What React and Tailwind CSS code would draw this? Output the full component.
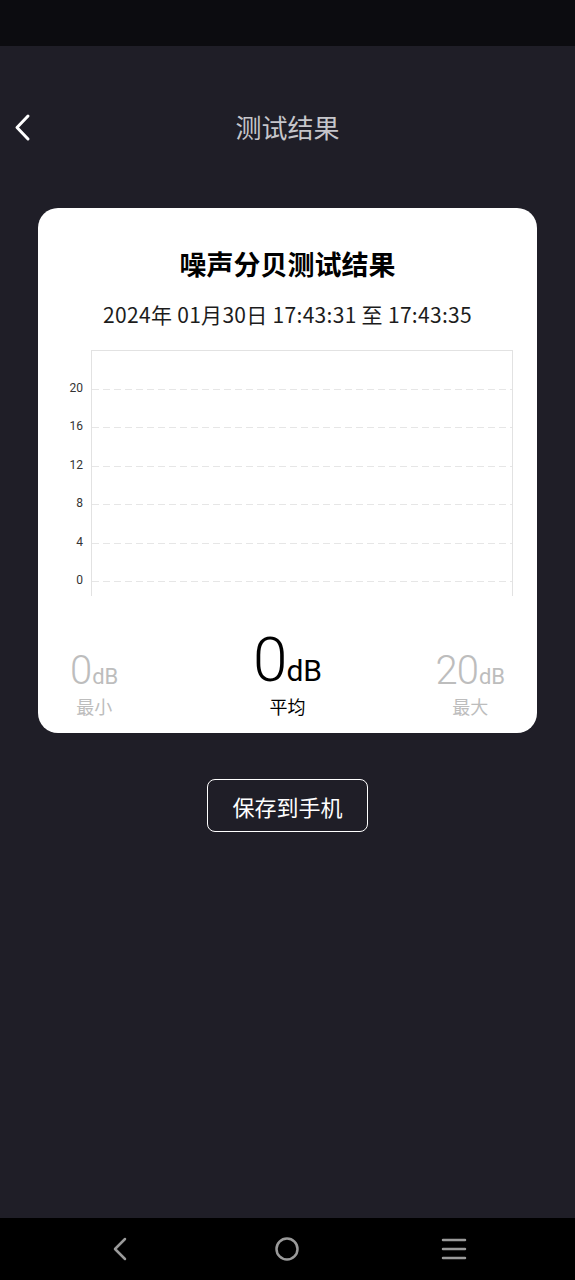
const ticks = [20, 16, 12, 8, 4, 0];

function Stat({ value, label, main, align }) {
  const tone = main ? 'text-black' : 'text-[#bdbdbd]';
  return (
    <div className={`flex flex-col items-center ${align}`}>
      <div className={`flex items-baseline leading-none ${tone}`} style={{ fontFamily: 'Roboto, "Liberation Sans", sans-serif' }}>
        <span className={main ? 'text-[62px] font-light tracking-[-2px]' : 'text-[40px] font-light tracking-[-1px]'}>{value}</span>
        <span className={main ? 'text-[30px] ml-[1px]' : 'text-[22px] ml-[1px]'}>dB</span>
      </div>
      <div className={`mt-[6px] text-[18px] leading-none ${tone}`}>{label}</div>
    </div>
  );
}

export default function App() {
  return (
    <div
      className="w-[575px] h-[1280px] bg-[#1f1e27] flex flex-col"
      style={{ fontFamily: '"Noto Sans CJK SC", "Noto Sans", sans-serif' }}
    >
      <div className="h-[46px] bg-[#0c0c10] shrink-0" />

      {/* header */}
      <div className="h-[82px] mt-[40px] flex items-center justify-center relative">
        <svg className="absolute left-[12px] top-[27px]" width="20" height="30" viewBox="0 0 20 30">
          <path d="M16 3 L5 14.5 L16 26" fill="none" stroke="#fff" strokeWidth="3" strokeLinecap="round" strokeLinejoin="round" />
        </svg>
        <span className="text-[26px] text-[#c6c6cb] leading-none">测试结果</span>
      </div>

      {/* card */}
      <div className="mx-[38px] mt-[40px] bg-white rounded-[20px] pt-[42px] pb-[18px]">
        <div className="text-center text-[27px] font-bold text-black leading-none">噪声分贝测试结果</div>
        <div className="text-center text-[21px] tracking-[0.3px] text-[#1c1c1c] leading-none mt-[27px]">2024年 01月30日 17:43:31 至 17:43:35</div>

        <div className="relative ml-[53px] mr-[24px] mt-[25px] h-[246px] border-l border-r border-t border-[#e2e2e2] pt-[38px]">
          {ticks.map((t, i) => (
            <div key={t} className={`relative ${i === ticks.length - 1 ? 'h-[15px]' : 'h-[38.4px]'}`}>
              <div className="h-px bg-[repeating-linear-gradient(to_right,#e6e6e6_0_7px,transparent_7px_11px)]" />
              <span
                className="absolute right-[calc(100%+9px)] top-[-7px] text-[12px] leading-none text-[#333]"
                style={{ fontFamily: 'Roboto, "Liberation Sans", sans-serif' }}
              >
                {t}
              </span>
            </div>
          ))}
        </div>

        <div className="grid grid-cols-3 items-end px-[32px] mt-[33px]">
          <Stat value="0" label="最小" align="justify-self-start" />
          <Stat value="0" label="平均" main align="justify-self-center" />
          <Stat value="20" label="最大" align="justify-self-end" />
        </div>
      </div>

      {/* save button */}
      <div className="flex justify-center mt-[46px]">
        <button className="w-[161px] h-[53px] border-[1.5px] border-white rounded-[8px] text-white text-[22px] leading-none">
          保存到手机
        </button>
      </div>

      <div className="flex-1" />

      {/* system nav bar */}
      <div className="h-[62px] bg-black shrink-0 flex items-center justify-between px-[108px]">
        <svg width="24" height="26" viewBox="0 0 24 26">
          <path d="M17 3 L7 13 L17 23" fill="none" stroke="#9a9a9a" strokeWidth="2.5" strokeLinecap="round" strokeLinejoin="round" />
        </svg>
        <svg width="26" height="26" viewBox="0 0 26 26">
          <circle cx="13" cy="13" r="10.5" fill="none" stroke="#9a9a9a" strokeWidth="2.5" />
        </svg>
        <svg width="26" height="24" viewBox="0 0 26 24">
          <path d="M2 3 H24 M2 12 H24 M2 21 H24" fill="none" stroke="#9a9a9a" strokeWidth="2.5" strokeLinecap="round" />
        </svg>
      </div>
    </div>
  );
}
